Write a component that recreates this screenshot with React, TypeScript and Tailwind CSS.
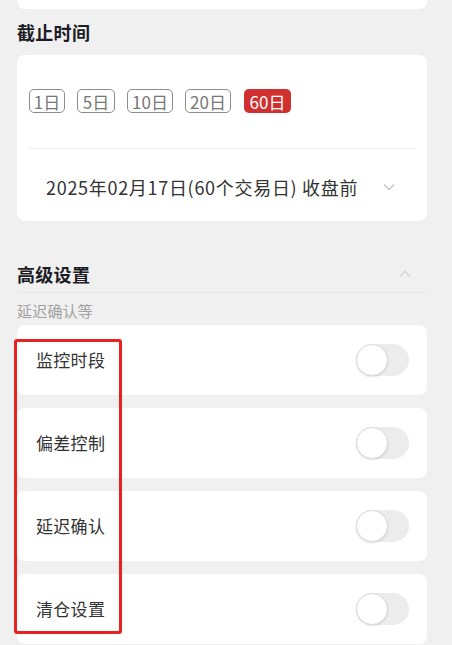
import React from "react";

const font = { fontFamily: '"Noto Sans CJK SC", "Noto Sans", sans-serif' };

function Chip({ label, w, active }: { label: string; w: string; active?: boolean }) {
  return (
    <div
      className={
        (active
          ? "h-[24px] flex items-center justify-center rounded-[5px] bg-[#d0302f] text-white text-[17px] leading-none "
          : "h-[24px] flex items-center justify-center rounded-[5px] border-[1.5px] border-[#8c8c8c] text-[#777] text-[17px] leading-none ") + w
      }
    >
      {label}
    </div>
  );
}

function Toggle() {
  return (
    <div className="w-[53px] h-[32px] rounded-full bg-[#ececec] relative">
      <div className="absolute left-0 top-0 w-[32px] h-[32px] rounded-full bg-white border border-[#dcdcdc] shadow-[0_1px_2px_rgba(0,0,0,0.12)]" />
    </div>
  );
}

function Row({ label }: { label: string }) {
  return (
    <div className="h-[70px] bg-white rounded-[8px] flex items-center justify-between pl-[19px] pr-[18px]">
      <span className="text-[17px] text-[#333] tracking-[0.3px]">{label}</span>
      <Toggle />
    </div>
  );
}

export default function App() {
  return (
    <div className="w-[452px] h-[645px] bg-[#f0f0f0] overflow-hidden relative" style={font}>
      <div className="ml-[17px] w-[410px]">
        <div className="h-[9px] bg-white rounded-b-[8px]" />
        <div className="mt-[11px] h-[24px] flex items-center text-[18px] font-bold text-[#1c1c24] tracking-[0.3px]">截止时间</div>
        <div className="mt-[11px] h-[166px] bg-white rounded-[8px] flex flex-col">
          <div className="mt-[34px] ml-[12px] flex gap-[12px]">
            <Chip label="1日" w="w-[36px]" />
            <Chip label="5日" w="w-[38px]" />
            <Chip label="10日" w="w-[46px]" />
            <Chip label="20日" w="w-[46px]" />
            <div className="ml-[1px]">
              <Chip label="60日" w="w-[47px]" active />
            </div>
          </div>
          <div className="mt-[35px] mx-[11px] h-px bg-[#eeeeee]" />
          <div className="mt-[25px] h-[26px] flex items-center pl-[29px]">
            <span className="text-[18px] text-[#333] whitespace-nowrap tracking-[0.7px]">2025年02月17日(60个交易日) 收盘前</span>
            <svg className="ml-auto mr-[32px]" width="12" height="8" viewBox="0 0 12 8" fill="none">
              <path d="M1 1.5 L6 6.5 L11 1.5" stroke="#c4c4c4" strokeWidth="1.3" />
            </svg>
          </div>
        </div>
        <div className="mt-[41px] h-[24px] flex items-center justify-between">
          <span className="text-[18px] font-bold text-[#1c1c24] tracking-[0.3px]">高级设置</span>
          <svg className="mr-[16px]" width="12" height="8" viewBox="0 0 12 8" fill="none">
            <path d="M1 6.5 L6 1.5 L11 6.5" stroke="#d4d4d4" strokeWidth="1.3" />
          </svg>
        </div>
        <div className="mt-[6px] h-px bg-[#e6e6e6]" />
        <div className="mt-[7px] h-[22px] flex items-center text-[15px] text-[#a0a0a0] tracking-[0.2px]">延迟确认等</div>
        <div className="mt-[3px] flex flex-col gap-[13px]">
          <Row label="监控时段" />
          <Row label="偏差控制" />
          <Row label="延迟确认" />
          <Row label="清仓设置" />
        </div>
      </div>
      <div className="absolute left-[14px] top-[339px] w-[108px] h-[295px] border-[3px] border-[#e8221f] rounded-[3px]" />
    </div>
  );
}
